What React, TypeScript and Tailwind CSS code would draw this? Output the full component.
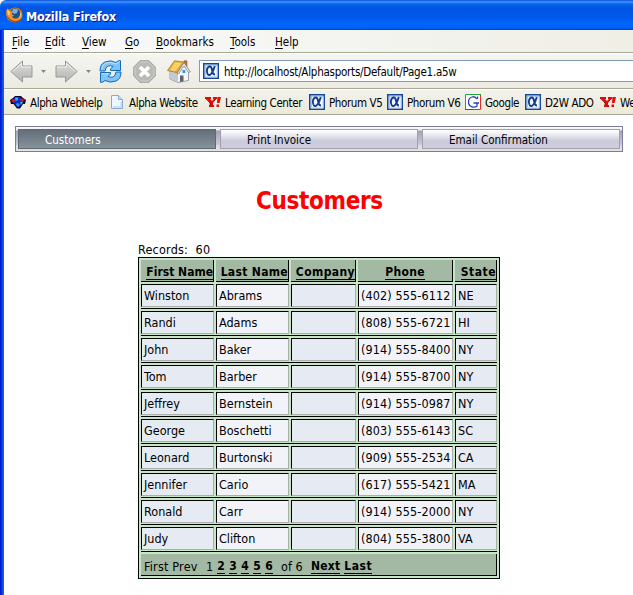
import React from "react";

const customers = [
  ["Winston", "Abrams", "", "(402) 555-6112", "NE"],
  ["Randi", "Adams", "", "(808) 555-6721", "HI"],
  ["John", "Baker", "", "(914) 555-8400", "NY"],
  ["Tom", "Barber", "", "(914) 555-8700", "NY"],
  ["Jeffrey", "Bernstein", "", "(914) 555-0987", "NY"],
  ["George", "Boschetti", "", "(803) 555-6143", "SC"],
  ["Leonard", "Burtonski", "", "(909) 555-2534", "CA"],
  ["Jennifer", "Cario", "", "(617) 555-5421", "MA"],
  ["Ronald", "Carr", "", "(914) 555-2000", "NY"],
  ["Judy", "Clifton", "", "(804) 555-3800", "VA"],
];

const menus = [
  { label: "File", w: "w-[33px]" },
  { label: "Edit", w: "w-[37px]" },
  { label: "View", w: "w-[43px]" },
  { label: "Go", w: "w-[31px]" },
  { label: "Bookmarks", w: "w-[74px]" },
  { label: "Tools", w: "w-[45px]" },
  { label: "Help", w: "w-[40px]" },
];

function FirefoxLogo() {
  return (
    <svg width="17" height="17" viewBox="0 0 17 17">
      <path d="M1 1.500l2.500 1Q8-.5 12 1q4.500 2 4.500 7-.5 7-8 7.500Q1 15 .5 8 .3 4 1 1.500z" fill="#e8780f" />
      <circle cx="9" cy="6.500" r="5.200" fill="#1d4f96" />
      <path d="M7 2q4-1 5 1l-1 3-3 1-2-2z" fill="#6fb4dc" />
      <path d="M1 2l3 2 3 .5L5.500 7 8 8.500 6 10q2 2.500 5 1.500 4-1.500 3.500-6.500 2.500 3 1 6-2 4-7 4Q1 15 .5 8 .3 4 1 2z" fill="#f39321" />
      <path d="M.8 8q.5 6 7.500 7.500 6 0 7.700-5-3 3.500-7 3.500Q3 13 .8 8z" fill="#b94408" />
      <path d="M1.500 3L4 5 3 9Q1 6 1.500 3zM14 4q1.500 3 .5 6l-1 .5q1-3 .5-6.500z" fill="#ffd766" />
    </svg>
  );
}

function Arrow({ flip = false }: { flip?: boolean }) {
  return (
    <svg width="23" height="23" viewBox="0 0 23 23" className={flip ? "shrink-0 -scale-x-100" : "shrink-0"}>
      <defs>
        <linearGradient id="arrow" x1="0" y1="0" x2="0" y2="1">
          <stop stopColor="#dededc" />
          <stop offset="1" stopColor="#b2b2b0" />
        </linearGradient>
      </defs>
      <path d="M.8 11.500L12.500 1v5H22v11h-9.500v5z" fill="url(#arrow)" stroke="#999997" />
      <path d="M2.500 11.500l9-8V7H21" fill="none" stroke="#efefed" />
    </svg>
  );
}

function Chevron() {
  return (
    <svg width="5" height="3" viewBox="0 0 5 3">
      <path d="M0 0h5L2.500 3z" fill="#7f8688" />
    </svg>
  );
}

function Reload() {
  return (
    <svg width="23" height="23" viewBox="0 0 23 23" className="shrink-0">
      <path d="M1 11q0-7 5-9 6-2.500 11 .5L19.500.7h2v9.800h-10V9L14 6.500Q9 4.500 7 8l-1 3z" fill="#7cc3f7" stroke="#1768bd" />
      <path d="M22 12q0 7-5 9-6 2.500-11-.5l-2.500 1.800h-2v-9.800h10V14L9 16.500q5 2 7-1.500l1-3z" fill="#7cc3f7" stroke="#1768bd" />
      <path d="M2.500 9.500Q3 4.500 7 3q5-1.500 10 1l3.500-2.500M3 13.700h6l-3 3" fill="none" stroke="#bfe6ff" />
    </svg>
  );
}

function Stop() {
  return (
    <svg width="23" height="23" viewBox="0 0 23 23">
      <path d="M7 .8h9L22.200 7v9L16 22.200H7L.8 16V7z" fill="#b9b9b7" stroke="#979795" />
      <path d="M7.500 2h8L21 7.500v8L15.500 21h-8L2 15.500v-8z" fill="none" stroke="#d0d0ce" />
      <path d="M7 7l9 9m0-9l-9 9" stroke="#fff" strokeWidth="3.800" />
    </svg>
  );
}

function Home() {
  return (
    <svg width="24" height="23" viewBox="0 0 24 23">
      <path d="M3 10.500v8.500l8 3.500 10.500-2V11L16 4z" fill="#f4f4fa" stroke="#858993" strokeWidth=".8" />
      <path d="M3.300 11v7.700l7.700 3.400V12z" fill="#c3c8d2" />
      <path d="M17 .8h3v6l-3-3z" fill="#c4753a" stroke="#8b4a20" strokeWidth=".5" />
      <path d="M.5 10.500L7.500.8 17 2l-7 10.500z" fill="#e6b23c" stroke="#a77316" strokeWidth=".8" />
      <path d="M8 2.200l6.500.8-6.500 8.200-5-.9z" fill="#fbd266" />
      <path d="M10 13.500L17 2.500l6.300 9.200-1.500 1L17 6l-5.500 8z" fill="#e4e6eb" stroke="#777a82" strokeWidth=".7" />
      <path d="M13 15.500h3.500v5.700l-3.500.7z" fill="#59616f" />
      <path d="M15.500 10h2.800v3h-2.800z" fill="#468fd2" />
    </svg>
  );
}

function Alpha() {
  return (
    <svg width="16" height="16" viewBox="0 0 16 16" className="shrink-0">
      <rect x=".75" y=".75" width="14.500" height="14.500" fill="#f7fbff" stroke="#164797" strokeWidth="1.500" />
      <path d="M2 14V2h12" fill="none" stroke="#6c96d0" />
      <path d="M2 13.800h12V3" fill="none" stroke="#bcd2ee" />
      <path d="M11.800 3q-1.500 5.500-3.300 7.500-2 2.500-3.700.8Q3.500 9.500 4 6.500 4.800 3.300 7 3.500q1.700.3 2.200 4 .5 4 2.800 4" fill="none" stroke="#123c8c" strokeWidth="1.900" />
    </svg>
  );
}

function Yahoo() {
  return (
    <svg width="16" height="10" viewBox="0 0 16 10">
      <path d="M0 0h6v2H5l2 2 2-2H8V0h4v2h-1L8 6v2h1v2H4V8h1V6L1.500 2H0z" fill="#e80808" />
      <path d="M12.500 0H16l-1.500 6H12zM11.500 7.500H14V10h-2.500z" fill="#e80808" />
      <path d="M1 2l4 4v2M9 4l2-2" fill="none" stroke="#601010" strokeWidth=".7" />
    </svg>
  );
}

function Google() {
  return (
    <svg width="16" height="16" viewBox="0 0 16 16">
      <path d="M0 0h16v16H0z" fill="#fff" />
      <path d="M.5 16V.5H16" fill="none" stroke="#24a63a" />
      <path d="M0 15.500h8" stroke="#2451c2" />
      <path d="M8 15.500h7.500V1" fill="none" stroke="#e02e27" />
      <path d="M12.500 5V2.500M12 5Q10 2 7 3 3.500 4 3.500 8t4 5q3 .5 4.500-1V9H8.500m2.500 0h3" fill="none" stroke="#2346ad" strokeWidth="1.300" />
    </svg>
  );
}

function Webhelp() {
  return (
    <svg width="16" height="13" viewBox="0 0 16 13">
      <path d="M0 4l3-2 2-2h6l2 2 3 2-1 4h-2l-3 4.500H7L3.500 8H1z" fill="#06062c" />
      <path d="M4 2l3-1h3l2 3v4l-3 3H7L4 7z" fill="#1420d8" />
      <path d="M5 1.500h3L8 4 5.500 5zM10 6h3l-2 3z" fill="#10c8d8" />
      <path d="M1 4l3-1 2 2-3 2zM9 3l3.500-.5L14.500 5 12 6z" fill="#d51522" />
      <path d="M5.500 8l2.500-1 2 2-2 2z" fill="#3098e8" />
    </svg>
  );
}

function Page() {
  return (
    <svg width="12" height="14" viewBox="0 0 12 14">
      <path d="M.5.5h7l4 4v9H.5z" fill="#eef7ff" stroke="#8ba8d5" />
      <path d="M7.500.5v4h4" fill="#c8ddf5" stroke="#8ba8d5" />
      <path d="M2 12h8V7" fill="none" stroke="#c8e2fa" strokeWidth="2" />
    </svg>
  );
}

const bookmarks = [
  { icon: <Webhelp />, label: "Alpha Webhelp", w: "w-[101px]", iw: "w-[20px]" },
  { icon: <Page />, label: "Alpha Website", w: "w-[94px]", iw: "w-[18px]" },
  { icon: <Yahoo />, label: "Learning Center", w: "w-[104px]", iw: "w-[20px]" },
  { icon: <Alpha />, label: "Phorum V5", w: "w-[78px]", iw: "w-[20px]" },
  { icon: <Alpha />, label: "Phorum V6", w: "w-[78px]", iw: "w-[20px]" },
  { icon: <Google />, label: "Google", w: "w-[60px]", iw: "w-[20px]" },
  { icon: <Alpha />, label: "D2W ADO", w: "w-[75px]", iw: "w-[20px]" },
  { icon: <Yahoo />, label: "We", w: "w-[33px]", iw: "w-[20px]" },
];

const cols = "grid grid-cols-[73px_73px_65px_95px_42px] gap-x-[2px] h-[22px]";

const headers = [
  { label: "First Name", style: "justify-end" },
  { label: "Last Name", style: "justify-end tracking-[0.33px]" },
  { label: "Company", style: "justify-end tracking-[0.4px]" },
  { label: "Phone", style: "justify-center tracking-[0.3px]" },
  { label: "State", style: "justify-end tracking-[0.5px]" },
];

const cellStyles = [
  "bg-[#e6ebf3]",
  "bg-[#f2f3f9]",
  "bg-[#e6ebf3]",
  "bg-[#f2f3f9] tracking-[0.12px]",
  "bg-[#e6ebf3]",
];

const tab = "flex h-[20px] w-[198px] items-center border pl-[26px] pt-[3px]";
const idleTab = "border-[#a0a0ae] bg-[linear-gradient(180deg,#ffffff,#e8e8ef_30%,#cbcbd9_60%,#cdcddb)]";

export default function App() {
  return (
    <div className="flex h-[595px] w-[633px] flex-col overflow-hidden bg-white font-['DejaVu_Sans_Condensed','DejaVu_Sans',sans-serif] text-[11.5px] font-stretch-condensed whitespace-pre text-black">
      <header className="flex h-[30px] shrink-0 items-center rounded-tl-[6px] bg-[linear-gradient(180deg,#0a4fd8_0px,#3c96ff_2px,#0a62f0_4px,#0054e3_8px,#0058ea_17px,#0066ff_24px,#0062f6_28px,#003dd0_30px)] pl-[6px]">
        <FirefoxLogo />
        <span className="mt-[5px] ml-[3px] text-[12.5px] leading-none font-bold tracking-[-0.2px] text-white [text-shadow:1px_1px_0_#0a1883]">Mozilla Firefox</span>
      </header>
      <div className="flex min-h-0 flex-1">
        <div className="w-[4px] shrink-0 bg-[linear-gradient(90deg,#0019cf_0px,#0831d9_2px,#166aee_3px,#0855dd_4px)]" />
        <main className="flex w-[629px] shrink-0 flex-col">
          <nav className="flex h-[23px] items-center border-b border-[#aca899] bg-[linear-gradient(90deg,#fafafc,#efefe6)] pt-[3px] pl-[8px]">
            {menus.map((m) => (
              <span key={m.label} className={m.w}>
                <span className="underline underline-offset-2">{m.label[0]}</span>
                {m.label.slice(1)}
              </span>
            ))}
          </nav>
          <div className="flex h-[36px] items-center border-t border-b border-t-white border-b-[#aca899] bg-[linear-gradient(180deg,#f5f5f1,#ebebe2)] pl-[6px]">
            <Arrow />
            <span className="ml-[8px] flex w-[14px] shrink-0"><Chevron /></span>
            <Arrow flip />
            <span className="ml-[8px] flex w-[13px] shrink-0"><Chevron /></span>
            <Reload />
            <span className="ml-[11px] shrink-0"><Stop /></span>
            <span className="ml-[11px] shrink-0"><Home /></span>
            <div className="ml-[8px] flex h-[22px] w-[450px] shrink-0 items-center border border-[#7f9db9] bg-white pl-[3px]">
              <Alpha />
              <span className="ml-[5px] pt-[3px] tracking-[-0.25px]">http://localhost/Alphasports/Default/Page1.a5w</span>
            </div>
          </div>
          <div className="flex h-[26px] items-center border-t border-b border-t-white border-b-[#aca899] bg-[linear-gradient(180deg,#f2f2ec,#ece9d8)] pl-[6px]">
            {bookmarks.map((b) => (
              <div key={b.label} className={`flex h-full shrink-0 items-center ${b.w}`}>
                <span className={`shrink-0 ${b.iw}`}>{b.icon}</span>
                <span className="pt-[3px] tracking-[-0.4px]">{b.label}</span>
              </div>
            ))}
          </div>
          <nav className="mt-[11px] ml-[11px] flex h-[26px] w-[608px] gap-[4px] border border-[#7b7b9c] bg-[linear-gradient(180deg,#ffffff_0px,#e8e8f0_3px,#a3a3b8_4px,#b4b4c4_10px,#c8c8d8_17px,#dedede_19px,#e2e2e2_24px)] px-[2px] pt-[2px]">
            <div className={`${tab} border-[#5c6a76] bg-linear-to-b from-[#626e79] to-[#87929a] text-white`}>Customers</div>
            <div className={`${tab} ${idleTab}`}>Print Invoice</div>
            <div className={`${tab} ${idleTab}`}>Email Confirmation</div>
          </nav>
          <h1 className="mt-[35px] ml-[252px] text-[24px] leading-[28px] font-bold tracking-[-0.35px] text-[#ff0000]">Customers</h1>
          <div className="mt-[28px] ml-[134px] h-[14px] text-[12.5px] leading-[14px] tracking-[0.2px]">Records:  60</div>
          <section className="ml-[134px] flex h-[322px] w-[362px] flex-col border border-black bg-[#c6e7c6] p-[2px] text-[12px]">
            <div className={`${cols} mb-[2px]`}>
              {headers.map((h) => (
                <div key={h.label} className={`flex items-center border-r border-b border-black bg-[#a3b9a3] pt-[3px] font-bold ${h.style}`}>
                  <span className="border-b border-black leading-[14px]">{h.label}</span>
                </div>
              ))}
            </div>
            {customers.map((row) => (
              <div key={row[0]} className="flex h-[27px] flex-col gap-[2px] text-[12.5px]">
                <div className={cols}>
                  {row.map((cell, i) => (
                    <div key={i} className={`flex items-center border-t border-r border-b border-l border-t-black border-r-[#a9b0a9] border-b-[#a9b0a9] border-l-black pt-[2px] pl-[2px] ${cellStyles[i]}`}>{cell}</div>
                  ))}
                </div>
                <div className="h-px bg-black" />
              </div>
            ))}
            <footer className="flex h-[22px] items-center border-r border-b border-black bg-[#a3b9a3] pt-[3px] pl-[3px]">
              <span className="w-[62px] text-[12.5px] leading-[15px] tracking-[0.2px]">First Prev</span>
              <span className="w-[11px] text-[12.5px] leading-[15px]">1</span>
              {["2", "3", "4", "5", "6"].map((n) => (
                <span key={n} className="mr-[4px] w-[8px] border-b border-black text-center leading-[14px] font-bold">{n}</span>
              ))}
              <span className="ml-[4px] w-[30px] text-[12.5px] leading-[15px]">of 6</span>
              <span className="mr-[4px] border-b border-black leading-[14px] font-bold tracking-[0.2px]">Next</span>
              <span className="border-b border-black leading-[14px] font-bold tracking-[0.5px]">Last</span>
            </footer>
          </section>
        </main>
      </div>
    </div>
  );
}
